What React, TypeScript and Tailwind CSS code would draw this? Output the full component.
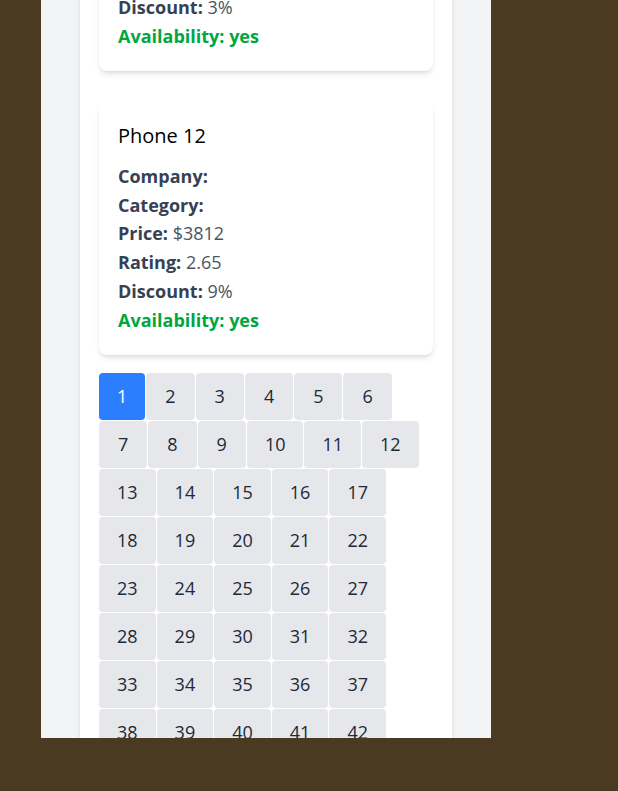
import React from 'react';

type Product = {
  name: string;
  company: string;
  category: string;
  price: number;
  rating: number;
  discount: number;
  available: boolean;
};

const products: Product[] = [
  { name: 'Phone 11', company: '', category: '', price: 2240, rating: 4.1, discount: 3, available: true },
  { name: 'Phone 12', company: '', category: '', price: 3812, rating: 2.65, discount: 9, available: true },
];

const pages = Array.from({ length: 50 }, (_, i) => i + 1);

function Row({ label, value }: { label: string; value?: string | number }) {
  return (
    <p className="text-[18px] leading-[28.8px] text-gray-600">
      <span className="font-bold text-gray-700">{label}:</span> {value}
    </p>
  );
}

function ProductCard({ p }: { p: Product }) {
  return (
    <div className="mb-[31px] rounded-lg bg-white px-[19px] py-5 shadow-md">
      <h2 className="mb-3 text-xl leading-7 text-black">{p.name}</h2>
      <Row label="Company" value={p.company} />
      <Row label="Category" value={p.category} />
      <Row label="Price" value={`$${p.price}`} />
      <Row label="Rating" value={p.rating} />
      <Row label="Discount" value={`${p.discount}%`} />
      <p className="text-[18px] font-bold leading-[28.8px] text-green-600">
        Availability: {p.available ? 'yes' : 'no'}
      </p>
    </div>
  );
}

function PageButton({ n, active }: { n: number; active: boolean }) {
  const pad = n === 1 ? 'px-[18px]' : n < 10 ? 'px-[19px]' : 'px-[18px]';
  return (
    <button
      className={
        active
          ? `h-[47px] rounded bg-blue-500 ${pad} text-[18px] font-medium text-white`
          : `h-[47px] rounded bg-gray-200 ${pad} text-[18px] font-medium text-gray-800`
      }
    >
      {n}
    </button>
  );
}

export default function App() {
  return (
    <div
      className="h-[791px] w-full bg-[#4a3a21]"
      style={{ fontFamily: '"Segoe UI", "Open Sans", "Noto Sans", sans-serif' }}
    >
      <div className="ml-[41px] h-[738px] w-[450px] overflow-hidden bg-gray-100">
        <div className="mx-auto min-h-full w-[372px] bg-white px-[19px] shadow-md">
          <div className="-mt-[182px]">
            {products.map((p) => (
              <ProductCard key={p.name} p={p} />
            ))}
            <div className="-mt-[13px] flex flex-wrap gap-px">
              {pages.map((n) => (
                <PageButton key={n} n={n} active={n === 1} />
              ))}
            </div>
          </div>
        </div>
      </div>
    </div>
  );
}
